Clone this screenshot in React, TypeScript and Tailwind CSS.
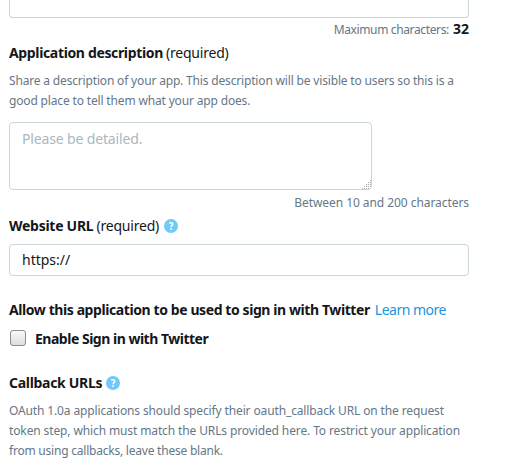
import { useState } from "react";

function HelpIcon() {
  return (
    <svg width="14" height="14" viewBox="0 0 14 14" className="shrink-0">
      <circle cx="7" cy="7" r="7" fill="#71c9f8" />
      <path d="M5.1 4.2C5.7 3.9 6.3 3.7 7 3.7C8.2 3.7 8.8 4.3 8.8 5.1C8.8 6.4 7 6.5 7 8.2" fill="none" stroke="#fff" strokeWidth="1.5" />
      <rect x="6.2" y="9.2" width="1.6" height="1.6" fill="#fff" />
    </svg>
  );
}

// dots of the resize handle, one [x, y] pair each
const gripDots = [
  [8, 0],
  [6, 2], [8, 2],
  [4, 4], [6, 4], [8, 4],
  [2, 6], [4, 6], [6, 6], [8, 6],
  [0, 8], [2, 8], [4, 8], [6, 8],
];

export default function App() {
  const [description, setDescription] = useState("");
  const [url, setUrl] = useState("https://");
  const [signIn, setSignIn] = useState(false);

  return (
    <div className="h-[470px] w-[506px] overflow-hidden bg-white pl-[9px] font-['Noto_Sans',sans-serif] text-[14px] leading-5 whitespace-nowrap text-[#14171a]">
      <div className="w-[460px]">
        <div className="h-[18px] rounded-b-[4px] border border-t-0 border-[#ccd6dd]" />
        <div className="mt-[1px] flex justify-end gap-1 text-[12px] text-[#657786]">
          <span className="pt-px tracking-[-0.36px]">Maximum characters:</span>
          <b className="text-[14px] text-[#14171a]">32</b>
        </div>

        <div className="mt-[3px] flex gap-[3px]">
          <b className="tracking-[-0.35px]">Application description</b>
          <span className="tracking-[-0.2px]">(required)</span>
        </div>
        <div className="mt-2 flex flex-col items-start text-[12px] text-[#657786]">
          <span className="tracking-[-0.17px]">Share a description of your app. This description will be visible to users so this is a</span>
          <span className="tracking-[-0.16px]">good place to tell them what your app does.</span>
        </div>
        <div className="relative mt-[11px] w-[363px]">
          <textarea
            className="block h-[68px] w-full resize-none rounded-[4px] border border-[#ccd6dd] px-3 py-[6px] tracking-[-0.15px] outline-none placeholder:text-[#aab8c2]"
            placeholder="Please be detailed."
            value={description}
            onChange={(e) => setDescription(e.target.value)}
          />
          <svg width="9" height="9" className="absolute right-[1px] bottom-[1px]">
            {gripDots.map(([x, y]) => (
              <rect key={`${x}-${y}`} x={x} y={y} width="1" height="1" fill="#a8a8a8" />
            ))}
          </svg>
        </div>
        <div className="mt-[3px] flex justify-end text-[12px] text-[#657786]">
          <span className="tracking-[-0.06px]">Between 10 and 200 characters</span>
        </div>

        <div className="mt-[3px] flex items-center">
          <b className="tracking-[-0.27px]">Website URL</b>
          <span className="ml-[3px] tracking-[-0.2px]">(required)</span>
          <span className="ml-[5px]"><HelpIcon /></span>
        </div>
        <input
          className="mt-2 block h-8 w-full rounded-[4px] border border-[#ccd6dd] px-3 pb-[2px] outline-none"
          value={url}
          onChange={(e) => setUrl(e.target.value)}
        />

        <div className="mt-6 flex gap-[5px]">
          <b className="tracking-[-0.41px]">Allow this application to be used to sign in with Twitter</b>
          <a href="#" className="tracking-[-0.5px] text-[#1b95e0]">Learn more</a>
        </div>
        <label className="mt-[9px] flex items-center">
          <input
            type="checkbox"
            className="relative -top-px ml-[1px] h-4 w-4 appearance-none rounded-[3px] border border-[#8c8c8c] bg-linear-to-b from-[#f8f8f8] to-[#dedede]"
            checked={signIn}
            onChange={(e) => setSignIn(e.target.checked)}
          />
          <b className="ml-[9px] tracking-[-0.49px]">Enable Sign in with Twitter</b>
        </label>

        <div className="mt-6 flex items-center gap-1">
          <b className="tracking-[-0.3px]">Callback URLs</b>
          <HelpIcon />
        </div>
        <div className="mt-2 flex flex-col items-start text-[12px] text-[#657786]">
          <span className="tracking-[-0.13px]">OAuth 1.0a applications should specify their oauth_callback URL on the request</span>
          <span className="tracking-[-0.12px]">token step, which must match the URLs provided here. To restrict your application</span>
          <span className="tracking-[-0.22px]">from using callbacks, leave these blank.</span>
        </div>
      </div>
    </div>
  );
}
